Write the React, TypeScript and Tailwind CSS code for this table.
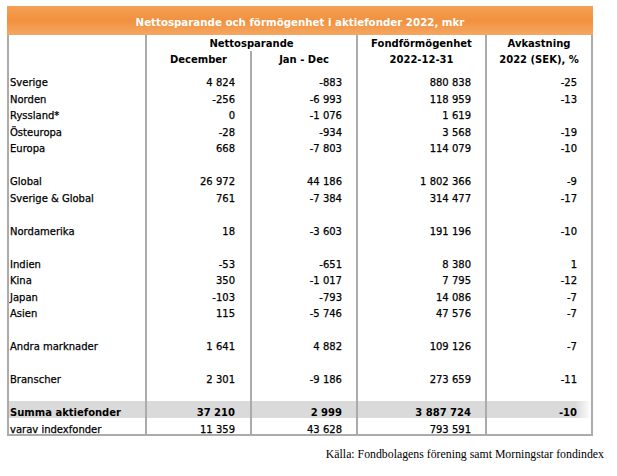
const rows: (string[] | null)[] = [
  ["Sverige", "4 824", "-883", "880 838", "-25"],
  ["Norden", "-256", "-6 993", "118 959", "-13"],
  ["Ryssland*", "0", "-1 076", "1 619", ""],
  ["Östeuropa", "-28", "-934", "3 568", "-19"],
  ["Europa", "668", "-7 803", "114 079", "-10"],
  null,
  ["Global", "26 972", "44 186", "1 802 366", "-9"],
  ["Sverige & Global", "761", "-7 384", "314 477", "-17"],
  null,
  ["Nordamerika", "18", "-3 603", "191 196", "-10"],
  null,
  ["Indien", "-53", "-651", "8 380", "1"],
  ["Kina", "350", "-1 017", "7 795", "-12"],
  ["Japan", "-103", "-793", "14 086", "-7"],
  ["Asien", "115", "-5 746", "47 576", "-7"],
  null,
  ["Andra marknader", "1 641", "4 882", "109 126", "-7"],
  null,
  ["Branscher", "2 301", "-9 186", "273 659", "-11"],
  null,
]

const cell = "h-[16.5px] pt-[7px] leading-[10px] border-r-2 border-[#ababab] whitespace-nowrap"

function Row({ r, bold, gray }: { r: string[] | null; bold?: boolean; gray?: boolean }) {
  const v = r ?? ["", "", "", "", ""]
  const weight = bold ? "font-bold" : "[-webkit-text-stroke:0.25px_#000]"
  const bg = gray ? "bg-[#dadada]" : ""
  return (
    <>
      <div className={`${cell} ${weight} ${bg} pl-[1px]`}>{v[0]}</div>
      <div className={`${cell} ${weight} ${bg} text-right pr-[15px]`}>{v[1]}</div>
      <div className={`${cell} ${weight} ${bg} text-right pr-[14px]`}>{v[2]}</div>
      <div className={`${cell} ${weight} ${bg} text-right pr-[14px]`}>{v[3]}</div>
      <div
        className={`${cell} ${weight} ${
          gray ? "bg-linear-to-r from-[#dadada] from-85% to-white" : ""
        } text-right pr-[14px]`}
      >
        {v[4]}
      </div>
    </>
  )
}

export default function App() {
  return (
    <div className="w-[617px] h-[476px] bg-white pt-[6px] text-black font-['DejaVu_Sans',sans-serif] text-[10px]">
      <div className="ml-[7px] w-[586px]">
        <div className="h-[29px] pt-[11px] leading-[10px] text-center text-white font-bold text-[10.25px] bg-linear-to-b from-[#f4a055] via-[#f1913e] to-[#f5a762]">
          Nettosparande och förmögenhet i aktiefonder 2022, mkr
        </div>

        <div className="grid grid-cols-[138px_105px_106px_129px_106px] border-l-2 border-b-2 border-[#ababab]">
          {/* header line 1 */}
          <div className="h-[16px] border-r-2 border-[#ababab]" />
          <div className="col-span-2 h-[16px] pt-[4px] leading-[10px] text-center font-bold border-r-2 border-[#ababab]">
            Nettosparande
          </div>
          <div className="h-[16px] pt-[4px] leading-[10px] text-center font-bold border-r-2 border-[#ababab]">
            Fondförmögenhet
          </div>
          <div className="h-[16px] pt-[4px] leading-[10px] text-center font-bold border-r-2 border-[#ababab]">
            Avkastning
          </div>

          {/* header line 2 */}
          <div className="h-[20px] border-r-2 border-[#ababab]" />
          <div className="h-[20px] pt-[4px] leading-[10px] text-center font-bold border-r-2 border-[#ababab]">
            December
          </div>
          <div className="h-[20px] pt-[4px] leading-[10px] text-center font-bold border-r-2 border-[#ababab]">
            Jan - Dec
          </div>
          <div className="h-[20px] pt-[4px] leading-[10px] text-center font-bold border-r-2 border-[#ababab]">
            2022-12-31
          </div>
          <div className="h-[20px] pt-[4px] leading-[10px] text-center font-bold border-r-2 border-[#ababab]">
            2022 (SEK), %
          </div>

          {rows.map((r, i) => (
            <Row key={i} r={r} />
          ))}
          <Row r={["Summa aktiefonder", "37 210", "2 999", "3 887 724", "-10"]} bold gray />
          <Row r={["varav indexfonder", "11 359", "43 628", "793 591", ""]} />
        </div>
      </div>

      <div className="mt-[12px] pr-[13px] text-right leading-[12px] text-[11.8px] font-['Liberation_Serif',serif]">
        Källa: Fondbolagens förening samt Morningstar fondindex
      </div>
    </div>
  )
}
